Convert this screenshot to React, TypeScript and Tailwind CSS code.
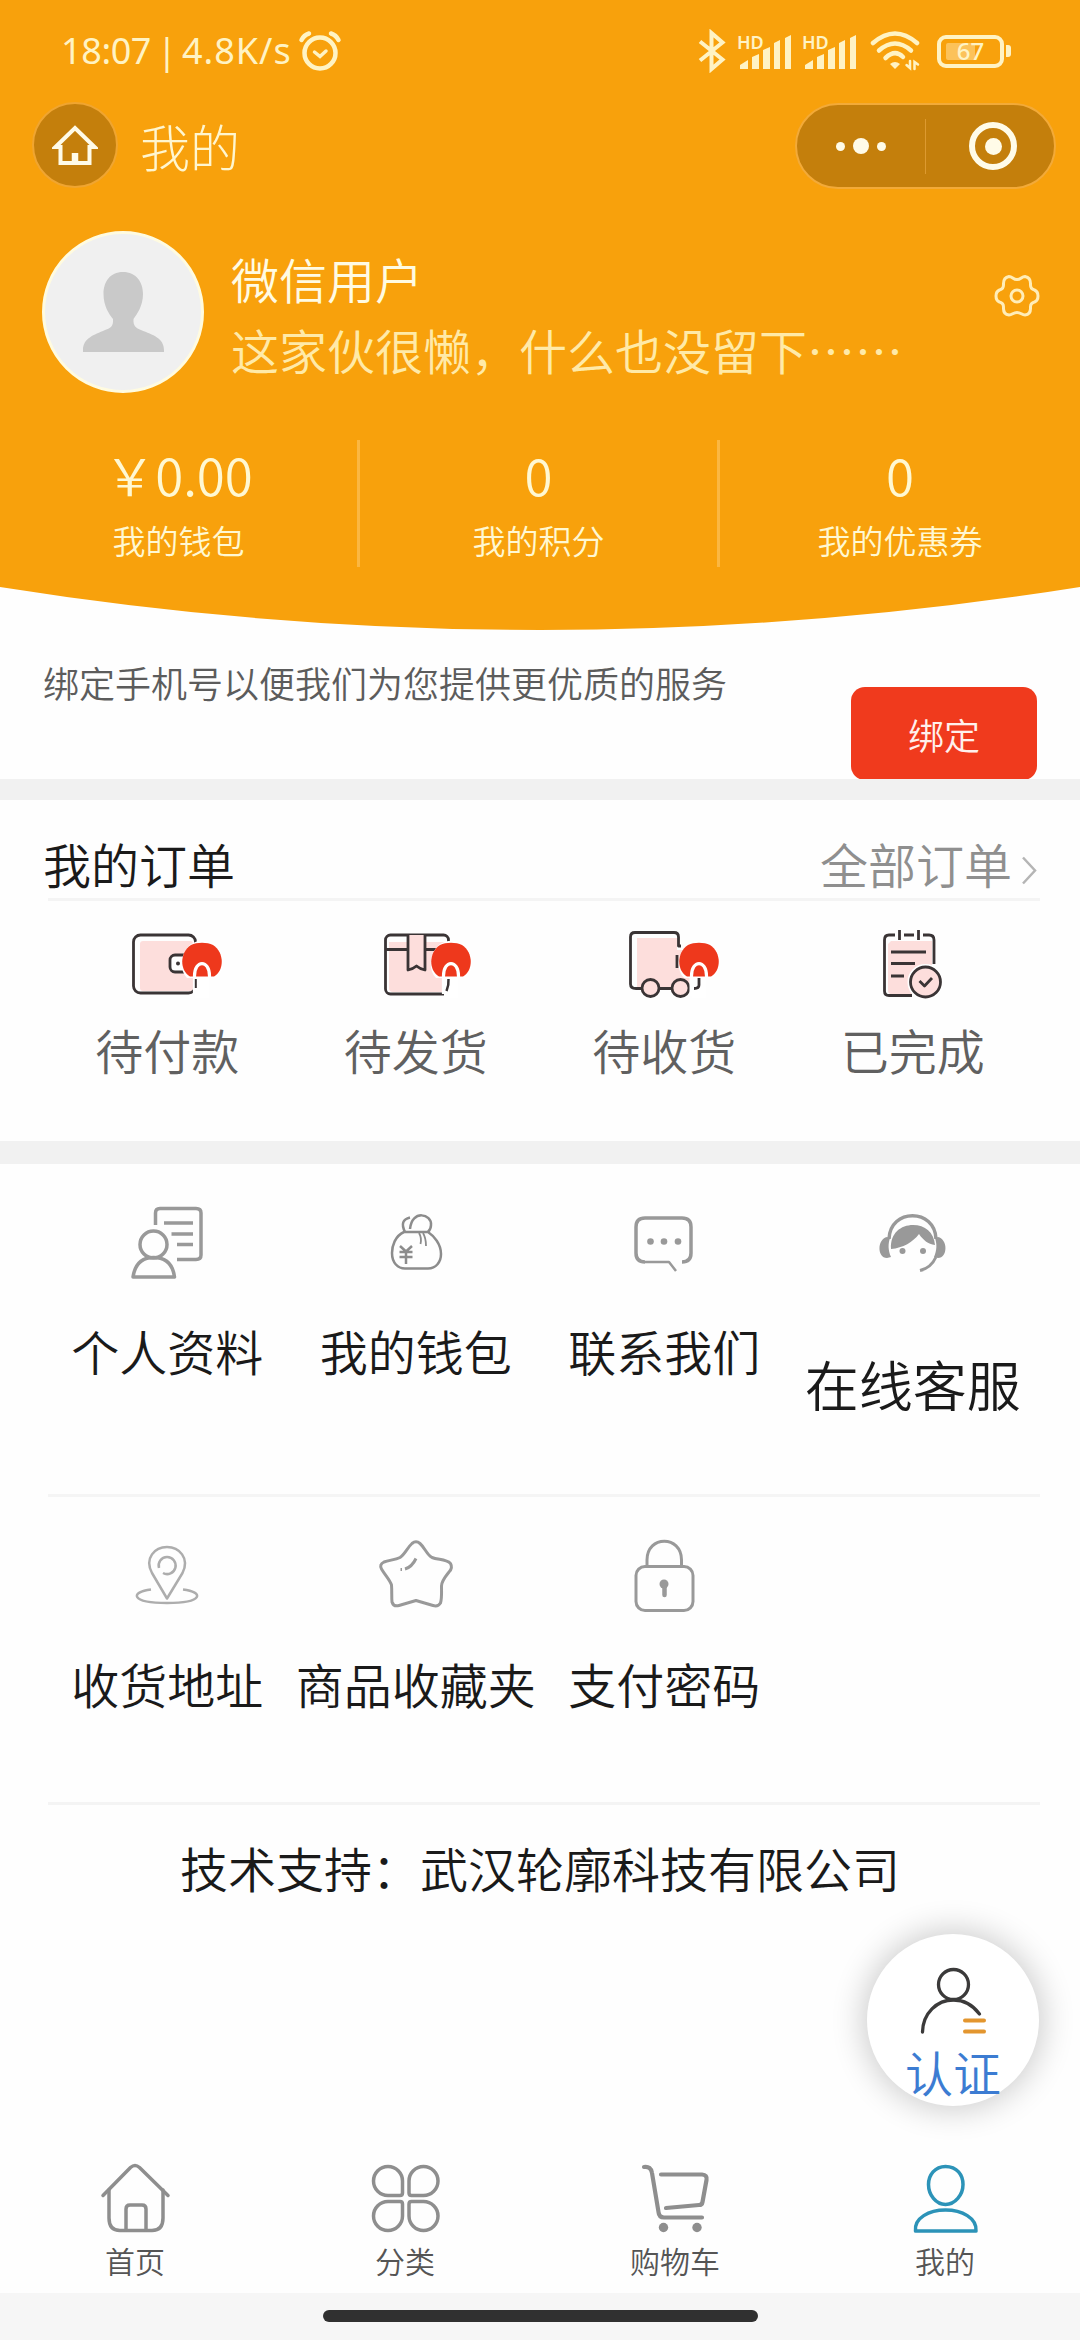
import React from "react";

type IconProps = { children: React.ReactNode };

const DARK = "#3a3435";
const PINK = "#fddedc";

function StatusBar() {
  return (
    <div className="flex h-[102px] items-center pr-[69px] pl-[61px] text-[#fff3c4]">
      <div className="flex w-[234px] items-center font-['Noto_Sans'] text-[36px] leading-[40px] font-normal">
        <span className="w-[91px] tracking-[-0.4px]">18:07</span>
        <span className="w-[30px] text-center">|</span>
        <span className="whitespace-nowrap tracking-[1px]">4.8K/s</span>
      </div>
      <svg className="ml-[1px]" width="48" height="44" viewBox="0 0 48 44" fill="none" stroke="currentColor" strokeLinecap="round">
        <circle cx="24" cy="24" r="15.5" strokeWidth="4.5" />
        <path d="M5.5 11 Q8 6 13 4.5 M42.500 11 Q40 6 35 4.500" strokeWidth="4.500" />
        <path d="M18.500 23 L24 27.500 L30 22" strokeWidth="3.500" />
      </svg>
      <div className="ml-auto flex items-center">
        <svg width="28" height="44" viewBox="0 0 28 44" fill="none" stroke="currentColor" strokeWidth="4">
          <path d="M2 12.500 L24.500 30.500 L13.500 40 V4 L24.500 13.500 L2 31.500" />
        </svg>
        <Signal />
        <Signal />
        <svg className="ml-[14px]" width="50" height="42" viewBox="0 0 50 42" fill="none" stroke="currentColor" strokeLinecap="round">
          <path d="M3 13 Q25 -6 47 13" strokeWidth="4.500" />
          <path d="M9 20.500 Q25 6.500 41 20.500" strokeWidth="4.500" />
          <path d="M15.500 28 Q25 19 33 27" strokeWidth="4.500" />
          <path d="M20 34 Q25 30 30 34 L25 39 Z" fill="currentColor" stroke="none" />
          <path d="M40 31 V38 L36.500 35 M44.500 39 V32 L48 34.500" strokeWidth="2.500" />
        </svg>
        <div className="ml-[17px] flex items-center">
          <div className="relative flex h-[33px] w-[67px] items-center justify-center rounded-[9px] border-4 border-current">
            <div className="absolute top-[4px] left-[5px] h-[17px] w-[29px] rounded-[2px] bg-[#fcc25a]" />
            <span className="relative font-['Noto_Sans'] text-[24px] leading-[24px] font-medium">67</span>
          </div>
          <div className="ml-[2px] h-[12px] w-[5px] rounded-r-[3px] bg-current" />
        </div>
      </div>
    </div>
  );
}

function Signal() {
  return (
    <div className="relative ml-[11px] h-[44px] w-[54px]">
      <span className="absolute top-[4px] left-0 font-['Noto_Sans'] text-[18px] leading-[18px] font-semibold">HD</span>
      <svg className="absolute inset-0" width="54" height="44" viewBox="0 0 54 44" fill="currentColor">
        <path d="M3 40 V36 L11 31 V40 Z M15 40 V28 L22 25 V40 Z M26 40 V21 L33 18 V40 Z M37 40 V14 L43 11 V40 Z M48 40 V9 L54 6 V40 Z" />
      </svg>
    </div>
  );
}

function NavBar() {
  return (
    <div className="flex h-[86px] items-center justify-between pr-[24px] pl-[32px]">
      <div className="flex items-center">
        <div className="flex size-[86px] items-center justify-center rounded-full border-2 border-[#f0a530] bg-[#c47f0c]">
          <svg width="46" height="44" viewBox="0 0 46 44" fill="none" stroke="#fffbe8" strokeWidth="4" strokeLinejoin="miter">
            <path d="M3.500 24 L23 5 L42.500 24 H37.500 V40 H8.500 V24 Z" />
            <path d="M23 40 V30" strokeWidth="6.500" />
          </svg>
        </div>
        <h1 className="ml-[22px] text-[50px] leading-[56px] font-light text-[#fff6cf]">我的</h1>
      </div>
      <div className="mt-[2px] flex h-[86px] w-[261px] items-center rounded-full border-2 border-[#f3aa38] bg-[#c47f0c]">
        <div className="flex w-[128px] items-center justify-center gap-[8px]">
          <i className="size-[9px] rounded-full bg-[#fffbe8]" />
          <i className="size-[16px] rounded-full bg-[#fffbe8]" />
          <i className="size-[9px] rounded-full bg-[#fffbe8]" />
        </div>
        <div className="h-[55px] w-px bg-[#dd9a30]" />
        <div className="flex flex-1 items-center justify-center pl-[6px]">
          <div className="flex size-[48px] items-center justify-center rounded-full border-[6px] border-[#fffbe8]">
            <i className="size-[17px] rounded-full bg-[#fffbe8]" />
          </div>
        </div>
      </div>
    </div>
  );
}

function Profile() {
  return (
    <div className="mt-[43px] flex h-[162px] items-start pr-[40px] pl-[42px]">
      <div className="size-[162px] overflow-hidden rounded-full border-[3px] border-[#fffbe0] bg-[#f0f0f0]">
        <svg width="156" height="156" viewBox="0 0 156 156" fill="#c9c9c9">
          <path d="M78 38 C91 38 98 48 98 60 C98 72 92 80 88.500 85 C88 92 91 94 96 96 C108 101 119 104 119 116 V118 H38 V116 C38 104 49 101 60 96 C66 94 68.500 92 68 85 C64 80 58.500 72 58.500 60 C58.500 48 65 38 78 38 Z" />
        </svg>
      </div>
      <div className="ml-[27px] pt-[12px]">
        <p className="text-[48px] leading-[71px] text-[#fffbe3]">微信用户</p>
        <p className="text-[48px] leading-[71px] whitespace-nowrap text-[#ffeaa8]">这家伙很懒，什么也没留下……</p>
      </div>
      <svg className="mt-[42px] ml-auto" width="46" height="46" viewBox="0 0 46 46" fill="none" stroke="#ffedb8" strokeWidth="3" strokeLinejoin="round">
        <circle cx="23" cy="23" r="6" />
        <path d="M9.500 12 Q9 4.500 15 3.500 C18.500 3.500 19 6.500 23 6.500 C27 6.500 27.500 3.500 31 3.500 Q37 4.500 36.500 12 Q36.500 16 40.500 17 Q44 18.500 44 23 Q44 27.500 40.500 29 Q36.500 30 36.500 34 Q37 41.500 31 42 C27.500 42 27 39.500 23 39.500 C19 39.500 18.500 42 15 42 Q9 41.500 9.500 34 Q9.500 30 5.500 29 Q2 27.500 2 23 Q2 18.500 5.500 17 Q9.500 16 9.500 12 Z" />
      </svg>
    </div>
  );
}

function Stats() {
  const items = [
    ["￥0.00", "我的钱包"],
    ["0", "我的积分"],
    ["0", "我的优惠券"],
  ];
  return (
    <div className="mt-[47px] grid h-[127px] grid-cols-3 divide-x-[3px] divide-[#fbb742] text-center text-[#fff8d2]">
      {items.map(([value, label]) => (
        <div key={label}>
          <div className="text-[51px] leading-[68px]">{value}</div>
          <div className="mt-[5px] text-[33px] leading-[54px]">{label}</div>
        </div>
      ))}
    </div>
  );
}

function OrderIcon({ children }: IconProps) {
  return (
    <svg width="112" height="72" viewBox="0 0 112 72" fill="none" stroke={DARK} strokeWidth="2.800" strokeLinejoin="round">
      {children}
    </svg>
  );
}

function Badge() {
  return (
    <g stroke="none">
      <path d="M84 70 V46 H98 V70 Z" fill="#fff" />
      <path d="M76 50 C67 41 70 24 80 16 C87 11.500 96 11.500 103 16 C114 24 115 41 106 50 Z" fill="#fff" />
      <path d="M79 48.500 C68 42 69 24 80 17 C86 14 96 14 102 17 C113 24 114 42 103 48.500 Z" fill="#ee381c" />
      <path d="M83.500 66 V48 C83.500 31.500 98.500 31.500 98.500 48 V50" fill="none" stroke="#fff" strokeWidth="3.200" />
    </g>
  );
}

const orders = [
  {
    label: "待付款",
    icon: (
      <>
        <rect x="29" y="13" width="53" height="50" rx="3" fill={PINK} stroke="none" />
        <rect x="22.500" y="7" width="62" height="58" rx="7" />
        <rect x="59" y="27" width="24" height="17" rx="5" fill="#fff" />
        <circle cx="67" cy="35.500" r="2" fill={DARK} stroke="none" />
        <Badge />
        <path d="M84.800 51 V60" strokeWidth="2" />
      </>
    ),
  },
  {
    label: "待发货",
    icon: (
      <>
        <path d="M29 14 H86 V64 H33 Q29 64 29 60 Z" fill={PINK} stroke="none" />
        <rect x="25.500" y="7" width="63" height="59" rx="5" />
        <path d="M26 21.500 H48 M65 21.500 H88" />
        <path d="M48 7 V42 Q53 41 56.500 38 Q60 41 65 42 V7" fill={PINK} />
        <Badge />
        <path d="M88.500 51 Q89 57 86.500 63" strokeWidth="2.500" />
      </>
    ),
  },
  {
    label: "待收货",
    icon: (
      <>
        <path d="M29 10 H69 V22 H84 V60 H29 Z" fill={PINK} stroke="none" />
        <path d="M34 60.500 H28 Q22.500 60.500 22.500 56 V9 Q22.500 4.500 27 4.500 H66 Q70.500 4.500 70.500 9 V18 H73 M69 27 V40 M50 60.500 H64" />
        <circle cx="42.500" cy="60" r="8.500" fill={PINK} />
        <Badge />
        <circle cx="72.500" cy="60" r="8.500" fill={PINK} />
        <path d="M83.500 50 V68" stroke="#fff" strokeWidth="4" />
        <path d="M91 50 V57 Q91 60.500 86 60.500" />
      </>
    ),
  },
  {
    label: "已完成",
    icon: (
      <>
        <path d="M34 13 H75 V40 L56 62 V66 H34 Q31 66 31 62 V16 Z" fill={PINK} stroke="none" />
        <path d="M38 7 H32 Q27.500 7 27.500 12 V63 Q27.500 67.500 32 67.500 H55 M47 7 H57 M66 7 H72 Q77 7 77 12 V36 M42.500 2 V12 M61.500 2 V12" />
        <path d="M34 24 H69 M34 35.500 H58 M34 48 H47" />
        <circle cx="68.500" cy="54" r="18" fill="#fff" stroke="none" />
        <circle cx="68.500" cy="54" r="15" fill={PINK} />
        <path d="M62.500 53 L67.500 58 L75 50" />
      </>
    ),
  },
];

function ToolIcon({ children }: IconProps) {
  return (
    <svg width="90" height="90" viewBox="0 0 90 90" fill="none" stroke="#999" strokeWidth="3.500" strokeLinejoin="round">
      {children}
    </svg>
  );
}

const toolsTop = [
  {
    label: "个人资料",
    icon: (
      <>
        <path d="M33.500 25 V13 Q33.500 8.500 38 8.500 H74 Q79 8.500 79 13 V55 Q79 59.500 74 59.500 H55" />
        <path d="M42 23 H71 M49.500 34 H71 M55 44.500 H71" />
        <circle cx="31.500" cy="44.500" r="13.500" />
        <path d="M11 77 Q14 57.500 31.500 57.500 Q50 57.500 52.500 77 Z" />
      </>
    ),
  },
  {
    label: "我的钱包",
    icon: (
      <g stroke="#8c8c8c" strokeWidth="2.500">
        <path d="M33 32 C24 36 21 46 21 53 C21 63 27 68.500 34 68.500 H57 C65 68.500 70 62 70 54 C70 44 63 36 57 32 Z" />
        <path d="M34 32 Q28 20 39 17.500 M39 29 C41 9 61 14 60 25 Q60 29 57 32" />
        <path d="M48 33 Q51 38 49.500 44 M52 33 Q55 38 55 46" strokeWidth="1.800" />
        <path d="M29 46 L35 51.500 L41 46 M28.500 52 H41.500 M28.500 57 H41.500 M35 51 V64" />
      </g>
    ),
  },
  {
    label: "联系我们",
    icon: (
      <>
        <path d="M63 62 Q72 62 72 53 V27 Q72 18 63 18 H26 Q17 18 17 27 V53 Q17 62 26 62" />
        <path d="M26 62 H50 L57 71" strokeWidth="2.500" />
        <g fill="#999" stroke="none">
          <circle cx="31.500" cy="41.500" r="3.300" />
          <circle cx="45" cy="41.500" r="3.300" />
          <circle cx="59" cy="41.500" r="3.300" />
        </g>
      </>
    ),
  },
  {
    label: "在线客服",
    large: true,
    icon: (
      <g fill="#999" stroke="none">
        <path d="M21 39 C22 8 67 8 68 39" fill="none" stroke="#999" strokeWidth="3.500" />
        <path d="M23 49 C22 33 33 25 45 25 C57 25 66 32 67 45 C60 44 55 40 51 34 C45 42 35 48 23 49 Z" />
        <path d="M19 37 C9 39 9 58 19 58 L23 57 C20 50 20 44 22 38 Z M70 37 C80 39 80 58 70 58 L66 57 C69 50 69 44 67 38 Z" />
        <circle cx="34.500" cy="51" r="3" />
        <circle cx="55" cy="51" r="3" />
        <path d="M68 57 Q63 68 52 70.500" fill="none" stroke="#999" strokeWidth="3" />
      </g>
    ),
  },
];

const toolsBottom = [
  {
    label: "收货地址",
    icon: (
      <g stroke="#adadad" strokeWidth="2.500">
        <path d="M45 65.500 L30 40 C22 25 33 14 45 14 C57 14 68 25 60.500 40 Z" />
        <path d="M37 35 A8.500 8.500 0 1 1 41 40" />
        <path d="M29 56.500 C8 59 8 70 45 70 C82 70 82 59 61 56.500" />
      </g>
    ),
  },
  {
    label: "商品收藏夹",
    icon: (
      <g strokeWidth="3">
        <path d="M41 10.500 Q45 7 49 10.500 C54 15 56 22 61 24.500 C67 27 75 26 79.500 30.500 Q82 35 78 39 C74 44 70.500 48 70.500 53 C70.500 60 71 65 69.500 70 Q67 74 62 72.500 L45 67.500 L28 72.500 Q22.500 74 21 69 C20.500 64 21 58 20.500 52 C19 47 14 42 10.500 36 Q8 31.500 13 29 C18 27 24 27 29 24.500 C34 21 36 15 41 10.500 Z" />
        <path d="M45 25.500 Q41 34 34 36 M29.500 36.500 H31" />
      </g>
    ),
  },
  {
    label: "支付密码",
    icon: (
      <g strokeWidth="3">
        <rect x="17" y="33.500" width="57" height="44" rx="9" />
        <path d="M28 33 V27 C28 2 62.500 2 62.500 27 V33" />
        <circle cx="45" cy="51" r="4.500" fill="#999" stroke="none" />
        <path d="M45.500 52 V62" strokeWidth="4.500" strokeLinecap="round" />
      </g>
    ),
  },
];

function ToolRow({ items }: { items: { label: string; icon: React.ReactNode; large?: boolean }[] }) {
  return (
    <div className="grid grid-cols-4 px-[43px] text-[#1a1a1a]">
      {items.map((t) => (
        <div key={t.label} className="flex flex-col items-center">
          <ToolIcon>{t.icon}</ToolIcon>
          <span
            className={
              t.large
                ? "mt-[64px] text-[54px] leading-[60px] whitespace-nowrap"
                : "mt-[30px] text-[48px] leading-[60px] whitespace-nowrap"
            }
          >
            {t.label}
          </span>
        </div>
      ))}
    </div>
  );
}

const tabs = [
  {
    label: "首页",
    icon: (
      <>
        <path d="M8 37.500 L35.500 9.500 Q40 5.500 44.500 9.500 L73 37.500" />
        <path d="M14 32 V60 Q14 72.500 25 72.500 H57 Q68 72.500 68 60 V32" />
        <path d="M31 72 V51 Q31 47 35 47 H47 Q51 47 51 51 V72" />
      </>
    ),
  },
  {
    label: "分类",
    icon: (
      <>
        <path d="M23 8.500 A14.500 14.500 0 0 1 37.500 23 V35 Q37.500 37.500 35 37.500 H23 A14.500 14.500 0 0 1 23 8.500 Z" />
        <path d="M58.500 8.500 A14.500 14.500 0 0 0 44 23 V35 Q44 37.500 46.500 37.500 H58.500 A14.500 14.500 0 0 0 58.500 8.500 Z" />
        <path d="M23 72.500 A14.500 14.500 0 0 0 37.500 58 V46 Q37.500 43.500 35 43.500 H23 A14.500 14.500 0 0 0 23 72.500 Z" />
        <path d="M58.500 72.500 A14.500 14.500 0 0 1 44 58 V46 Q44 43.500 46.500 43.500 H58.500 A14.500 14.500 0 0 1 58.500 72.500 Z" />
      </>
    ),
  },
  {
    label: "购物车",
    icon: (
      <g strokeWidth="4.200">
        <path d="M9 9 Q16 8 17 15 L23.500 54 Q24 59.500 29 59.500 H67" />
        <path d="M26 16.500 H67 Q72.500 17 71.500 22 L67.500 44 Q67 47 64 47 L31 50" />
        <circle cx="28.500" cy="69.500" r="4.700" fill="#8e8e8e" stroke="none" />
        <circle cx="62" cy="69.500" r="4.700" fill="#8e8e8e" stroke="none" />
      </g>
    ),
  },
  {
    label: "我的",
    icon: (
      <g stroke="#2c93b8">
        <path d="M40.500 8.500 C52 8.500 58 17 58 26.500 C58 37 50 46.500 40.500 46.500 C31 46.500 23.500 37 23.500 26.500 C23.500 17 30 8.500 40.500 8.500 Z" />
        <path d="M10.500 73 C9 60 24 52 40.500 52 C57 52 72 60 71 73 Z" />
      </g>
    ),
  },
];

export default function App() {
  return (
    <div className="relative flex h-[2340px] w-[1080px] flex-col overflow-hidden bg-[#fefefe] font-['Noto_Sans_CJK_SC',sans-serif] font-[350]">
      <header className="h-[587px] shrink-0 bg-[#f8a10c]">
        <StatusBar />
        <NavBar />
        <Profile />
        <Stats />
      </header>
      <svg className="block shrink-0" width="1080" height="43" viewBox="0 0 1080 43">
        <path d="M0 -1 V0 Q540 86 1080 0 V-1 Z" fill="#f8a10c" />
      </svg>

      <section className="flex h-[149px] shrink-0 items-start justify-between px-[43px]">
        <p className="mt-[25px] text-[36px] leading-[54px] text-[#5c5c5c]">绑定手机号以便我们为您提供更优质的服务</p>
        <button className="mt-[57px] h-[93px] w-[186px] rounded-[14px] bg-[#f03a1d] text-[36px] leading-[90px] text-[#fff0ec]">
          绑定
        </button>
      </section>
      <div className="h-[21px] shrink-0 bg-[#f1f1f1]" />

      <section className="h-[341px] shrink-0">
        <div className="mx-[43px] flex h-[98px] pt-[36px] text-[48px] leading-[54px]">
          <h2 className="flex-1 text-[#1a1a1a]">我的订单</h2>
          <span className="text-[#8f8f8f]">全部订单</span>
          <svg className="mt-[19px] ml-[7px]" width="18" height="31" viewBox="0 0 18 31" fill="none" stroke="#b5b5b5" strokeWidth="2.500">
            <path d="M4 2.500 L16 15.500 L4 28.500" />
          </svg>
        </div>
        <div className="mr-[40px] ml-[48px] h-[3px] bg-[#f4f4f4]" />
        <div className="mt-[27px] grid grid-cols-4 px-[43px] text-[#606060]">
          {orders.map((o) => (
            <div key={o.label} className="flex flex-col items-center">
              <OrderIcon>{o.icon}</OrderIcon>
              <span className="mt-[19px] text-[48px] leading-[60px]">{o.label}</span>
            </div>
          ))}
        </div>
      </section>
      <div className="h-[23px] shrink-0 bg-[#f1f1f1]" />

      <section className="h-[330px] shrink-0 pt-[36px]">
        <ToolRow items={toolsTop} />
      </section>
      <div className="mr-[40px] ml-[48px] h-[3px] shrink-0 bg-[#f5f5f5]" />
      <section className="h-[305px] shrink-0 pt-[36px]">
        <ToolRow items={toolsBottom} />
      </section>
      <div className="mr-[40px] ml-[48px] h-[3px] shrink-0 bg-[#f4f4f4]" />
      <p className="mt-[32px] shrink-0 text-center text-[48px] leading-[60px] text-[#1a1a1a]">技术支持：武汉轮廓科技有限公司</p>

      <nav className="mt-auto grid h-[135px] shrink-0 grid-cols-4 text-[30px] leading-[44px] text-[#555]">
        {tabs.map((t) => (
          <a key={t.label} className="flex flex-col items-center">
            <svg width="80" height="80" viewBox="0 0 80 80" fill="none" stroke="#8e8e8e" strokeWidth="3.500" strokeLinecap="round" strokeLinejoin="round">
              {t.icon}
            </svg>
            {t.label}
          </a>
        ))}
      </nav>
      <footer className="flex h-[47px] shrink-0 justify-center bg-[#f6f6f6] pt-[17px]">
        <div className="h-[12px] w-[435px] rounded-full bg-[#303030]" />
      </footer>

      <button className="absolute top-[1934px] left-[867px] flex size-[172px] flex-col items-center rounded-full bg-white shadow-[0_0_32px_4px_rgba(0,0,0,0.2)]">
        <svg className="mt-[30px]" width="80" height="74" viewBox="0 0 80 74" fill="none" stroke="#3b3a3a" strokeWidth="3.300" strokeLinecap="round">
          <circle cx="40.500" cy="20.500" r="15" />
          <path d="M9.500 68 C10 49 24 36 40.500 36 Q56 36 66.500 50" />
          <path d="M52 56.500 H71 M52 67.500 H71" stroke="#e3962f" strokeWidth="4" />
        </svg>
        <span className="mt-[5px] text-[48px] leading-[56px] text-[#3c7cd2]">认证</span>
      </button>
    </div>
  );
}
